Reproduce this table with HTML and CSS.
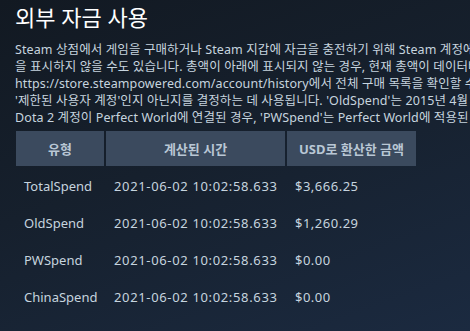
FILE: index.html
```html
<!DOCTYPE html>
<html lang="ko">
<head>
<meta charset="utf-8">
<link rel="stylesheet" href="styles.css">
</head>
<body>
<main class="page">
  <h1 class="title">외부 자금 사용</h1>
  <p class="desc">
    <span class="line">Steam 상점에서 게임을 구매하거나 Steam 지갑에 자금을 충전하기 위해 Steam 계정에 사용된 외부 자금의 총액입니다. 이 페이지는 일부 거래</span>
    <span class="line">을 표시하지 않을 수도 있습니다. 총액이 아래에 표시되지 않는 경우, 현재 총액이 데이터베이스에 기록되지 않았을 수 있습니다.</span>
    <span class="line">https://store.steampowered.com/account/history에서 전체 구매 목록을 확인할 수 있습니다. 이 값은 계정이</span>
    <span class="line">'제한된 사용자 계정'인지 아닌지를 결정하는 데 사용됩니다. 'OldSpend'는 2015년 4월 이전에 사용된 금액입니다.</span>
    <span class="line">Dota 2 계정이 Perfect World에 연결된 경우, 'PWSpend'는 Perfect World에 적용된 지출입니다.</span>
  </p>
  <table class="funds">
    <thead>
      <tr>
        <th class="c-type">유형</th>
        <th class="c-time">계산된 시간</th>
        <th class="c-usd">USD로 환산한 금액</th>
      </tr>
    </thead>
    <tbody>
      <tr><td>TotalSpend</td><td class="num date">2021-06-02 10:02:58.633</td><td class="num">$3,666.25</td></tr>
      <tr><td>OldSpend</td><td class="num date">2021-06-02 10:02:58.633</td><td class="num">$1,260.29</td></tr>
      <tr><td>PWSpend</td><td class="num date">2021-06-02 10:02:58.633</td><td class="num">$0.00</td></tr>
      <tr><td>ChinaSpend</td><td class="num date">2021-06-02 10:02:58.633</td><td class="num">$0.00</td></tr>
    </tbody>
  </table>
</main>
</body>
</html>
```

FILE: styles.css
```css
html, body {
  margin: 0;
  padding: 0;
  height: 100%;
  overflow: hidden;
}
body {
  background: linear-gradient(160deg, #121922 0%, #16202d 45%, #1b2a40 100%);
  font-family: "Noto Sans", "Noto Sans CJK KR", sans-serif;
  color: #c6d4df;
}
.page {
  padding: 0 0 0 15px;
}
.title {
  margin: 0;
  padding-top: 2px;
  font-size: 22px;
  font-weight: 400;
  line-height: 30px;
  color: #ffffff;
}
.desc {
  margin: 9px 0 0 0;
  font-size: 12.5px;
  letter-spacing: 0.1px;
  line-height: 17px;
  color: #c6d4df;
  white-space: nowrap;
  overflow: hidden;
}
.line {
  display: block;
}
.funds {
  margin: 3px 0 0 -1px;
  border-collapse: separate;
  border-spacing: 2px;
  font-size: 13px;
}
.funds th {
  background: #3b4a5e;
  color: #b9c7d5;
  font-weight: 700;
  height: 35px;
  padding: 0;
  text-align: center;
}
.c-type { width: 88px; }
.c-time { width: 179px; }
.c-usd { width: 129px; }
.funds td {
  height: 35px;
  padding: 0 0 0 8px;
  color: #c6d4df;
  text-align: left;
}
.funds td.num {
  letter-spacing: 0.5px;
}
.funds td.date {
  letter-spacing: 0.65px;
}
```
